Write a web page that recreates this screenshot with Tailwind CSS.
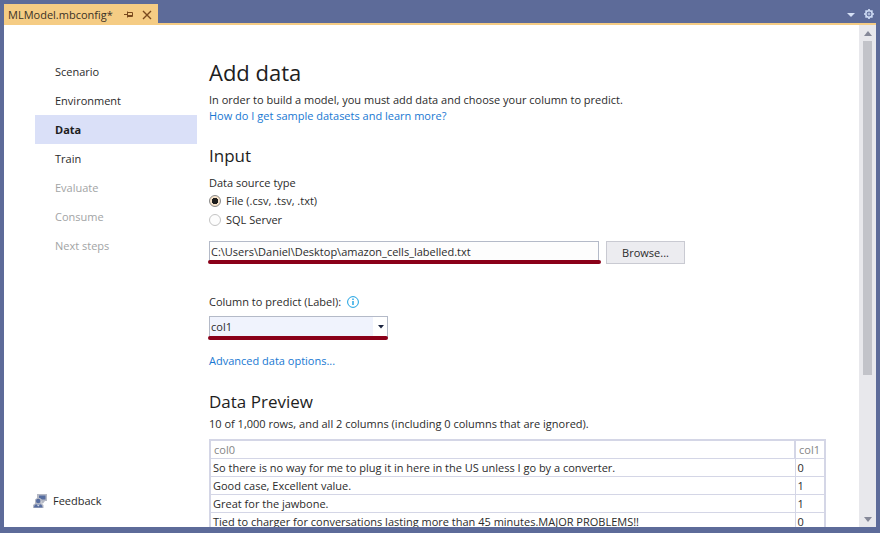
<!DOCTYPE html>
<html lang="en">
<head>
  <meta charset="UTF-8" />
  <meta name="viewport" content="width=device-width, initial-scale=1.0"/>
  <title>MLModel.mbconfig</title>
  <script src="https://cdn.jsdelivr.net/npm/@tailwindcss/browser@4"></script>
</head>
<body class="h-screen overflow-hidden flex flex-col bg-[#5d6b99] px-1 pt-1 pb-1.5 font-['Open_Sans',sans-serif] text-[11px] leading-4 text-[#2b2b2b]">

  <!-- tab strip -->
  <header class="flex justify-between h-[19px] shrink-0">
    <div class="flex items-center bg-[#f5cc84] pl-1 pr-1.5 pt-0.5 text-[#3b3226]">
      <span class="w-[116px] whitespace-nowrap">MLModel.mbconfig*</span>
      <button aria-label="Pin tab" class="mr-2">
        <svg class="block w-[10px] h-[10px]" viewBox="0 0 10 10" fill="none" stroke="#7a4a1e"><path d="M0 4.500h3.500M3.500 1.500v6M3.500 2.500h5v4h-5M3.500 5.500h5"/></svg>
      </button>
      <button aria-label="Close tab">
        <svg class="block w-[10px] h-[10px]" viewBox="0 0 10 10" stroke="#7a4a1e" stroke-width="1.400"><path d="M1 1l8 8M9 1l-8 8"/></svg>
      </button>
    </div>
    <div class="flex items-center gap-2 pr-px">
      <button aria-label="Open documents">
        <svg class="block w-2 h-1 mt-[3px]" viewBox="0 0 8 4" fill="#d5e0f5"><path d="M0 0h8L4 4z"/></svg>
      </button>
      <button aria-label="Settings">
        <svg class="block w-3 h-3" viewBox="0 0 12 12" fill="none" stroke="#cfdcf5"><circle cx="6" cy="6" r="3.200" stroke-width="1.500"/><circle cx="6" cy="6" r="1" stroke-width=".9"/><path stroke-width="1.700" d="M6 1v1.500M6 9.500V11M1 6h1.500M9.500 6H11M2.500 2.500l1 1M8.500 8.500l1 1M2.500 9.500l1-1M8.500 3.500l1-1"/></svg>
      </button>
    </div>
  </header>

  <div class="flex flex-1 min-h-0 bg-white border-t-2 border-[#f5cc84]">
    <!-- steps -->
    <nav class="flex flex-col w-[193px] shrink-0 pt-8 pb-[18px]">
      <a href="#" class="ml-[31px] pl-5 leading-[29px]">Scenario</a>
      <a href="#" class="ml-[31px] pl-5 leading-[29px]">Environment</a>
      <a href="#" class="ml-[31px] pl-5 leading-[29px] bg-[#dae0f8] font-bold text-[#1e1e1e]">Data</a>
      <a href="#" class="ml-[31px] pl-5 leading-[29px]">Train</a>
      <a href="#" class="ml-[31px] pl-5 leading-[29px] text-[#a2a4a5]">Evaluate</a>
      <a href="#" class="ml-[31px] pl-5 leading-[29px] text-[#a2a4a5]">Consume</a>
      <a href="#" class="ml-[31px] pl-5 leading-[29px] text-[#a2a4a5]">Next steps</a>
      <a href="#" class="mt-auto ml-[29px] flex items-center gap-1.5">
        <svg class="w-[14px] h-[14px]" viewBox="0 0 14 14"><path d="M4 0h10v7h-2l-2 2.500H8.500V7H4z" fill="#b4b8c4"/><path d="M6 1.500h6.500v4H9L6 4z" fill="#566da0"/><path d="M0 14V11l2-1.500V5.500l2-1.500h3l1.500 1.500v4l2 1.500v3z" fill="#b4b8c4"/><circle cx="5.200" cy="7" r="2.200" fill="#566da0"/><path d="M1 13.500c0-2.500 1.500-3.500 4.200-3.500s4.300 1 4.300 3.500z" fill="#566da0"/><path d="M3.500 10.500h3.500l-1.700 2z" fill="#d5d9e4"/></svg>
        Feedback
      </a>
    </nav>

    <main class="flex-1 min-w-0 overflow-hidden pl-3 pr-[33px] pt-7">
      <h1 class="text-[22px] leading-[39px] text-[#1e1e1e]">Add data</h1>
      <p>In order to build a model, you must add data and choose your column to predict.</p>
      <a href="#" class="block w-fit text-[#1878d2]">How do I get sample datasets and learn more?</a>

      <h2 class="mt-5 text-[17px] leading-6 text-[#1e1e1e]">Input</h2>
      <fieldset class="mt-[7px]">
        <legend>Data source type</legend>
        <label class="mt-px flex items-center gap-[5px] h-[18px]">
          <input type="radio" name="source" checked class="appearance-none w-3 h-3 rounded-full border border-[#8a8a8a] bg-[#f7e3cb] checked:bg-[radial-gradient(circle,#1e1e1e_3px,#f7e3cb_3.500px)]">
          File (.csv, .tsv, .txt)
        </label>
        <label class="flex items-center gap-[5px] h-[19px]">
          <input type="radio" name="source" class="appearance-none w-3 h-3 rounded-full border border-[#c4c4c4] bg-[#fdfdfd] checked:bg-[radial-gradient(circle,#1e1e1e_3px,#f7e3cb_3.500px)]">
          SQL Server
        </label>
      </fieldset>

      <div class="mt-3 flex gap-1">
        <div class="relative w-[393px]">
          <input type="text" aria-label="File path" value="C:\Users\Daniel\Desktop\amazon_cells_labelled.txt" class="block w-[390px] h-[21px] px-px border border-[#b4bac8] bg-[#fdfdfd]">
          <div class="absolute -left-px right-px top-[19px] h-1 rounded-full bg-[#8a0019]"></div>
        </div>
        <button class="w-[79px] h-[23px] border border-[#c9cad2] bg-[#ececf0]">Browse...</button>
      </div>

      <div class="mt-[30px] flex items-center gap-1.5">
        <label for="column">Column to predict (Label):</label>
        <svg class="w-3 h-3" viewBox="0 0 12 12" fill="none" stroke="#1ba1e2"><circle cx="6" cy="6" r="5.400"/><path stroke-width="1.400" d="M6 5v4M6 2.600v1.400"/></svg>
      </div>
      <div class="relative mt-1.5 w-[179px]">
        <select id="column" class="block appearance-none w-full h-[22px] px-px border border-[#b4bac8] bg-linear-to-r from-[#f0f3fd] from-92% to-white to-92%">
          <option>col1</option>
        </select>
        <svg class="absolute right-1 top-[9px] w-1.5 h-1 pointer-events-none" viewBox="0 0 6 4" fill="#1b2440"><path d="M0 0h6L3 3.500z"/></svg>
        <div class="absolute -left-px right-0 top-5 h-1 rounded-full bg-[#8a0019]"></div>
      </div>
      <a href="#" class="mt-[15px] block w-fit text-[#1878d2]">Advanced data options...</a>

      <h2 class="mt-[21px] text-[17px] leading-6 text-[#1e1e1e]">Data Preview</h2>
      <p class="mt-0.5">10 of 1,000 rows, and all 2 columns (including 0 columns that are ignored).</p>
      <table class="mt-[7px] w-full border-2 border-[#d4d6e6] border-collapse text-left leading-[17px]">
        <thead>
          <tr class="text-[#858585]">
            <th class="border border-l-2 border-t-2 border-[#d4d6e6] pl-[3px] font-normal">col0</th>
            <th class="w-[30px] border border-l-2 border-t-2 border-[#d4d6e6] pl-[3px] font-normal">col1</th>
          </tr>
        </thead>
        <tbody>
          <tr><td class="border border-[#d4d6e6] pl-0.5">So there is no way for me to plug it in here in the US unless I go by a converter.</td><td class="border border-[#d4d6e6] pl-0.5">0</td></tr>
          <tr><td class="border border-[#d4d6e6] pl-0.5">Good case, Excellent value.</td><td class="border border-[#d4d6e6] pl-0.5">1</td></tr>
          <tr><td class="border border-[#d4d6e6] pl-0.5">Great for the jawbone.</td><td class="border border-[#d4d6e6] pl-0.5">1</td></tr>
          <tr><td class="border border-[#d4d6e6] pl-0.5">Tied to charger for conversations lasting more than 45 minutes.MAJOR PROBLEMS!!</td><td class="border border-[#d4d6e6] pl-0.5">0</td></tr>
        </tbody>
      </table>
    </main>

    <!-- scrollbar -->
    <div class="flex flex-col items-center w-[17px] shrink-0 bg-[#e8e8ec] pt-1.5 pb-[5px]">
      <svg class="w-2 h-[5px] shrink-0" viewBox="0 0 8 5" fill="#868999"><path d="M0 5h8L4 0z"/></svg>
      <div class="mt-[5px] w-[9px] h-[68%] bg-[#c2c3c9]"></div>
      <svg class="mt-auto w-2 h-[5px] shrink-0" viewBox="0 0 8 5" fill="#868999"><path d="M0 0h8L4 5z"/></svg>
    </div>
  </div>
</body>
</html>
